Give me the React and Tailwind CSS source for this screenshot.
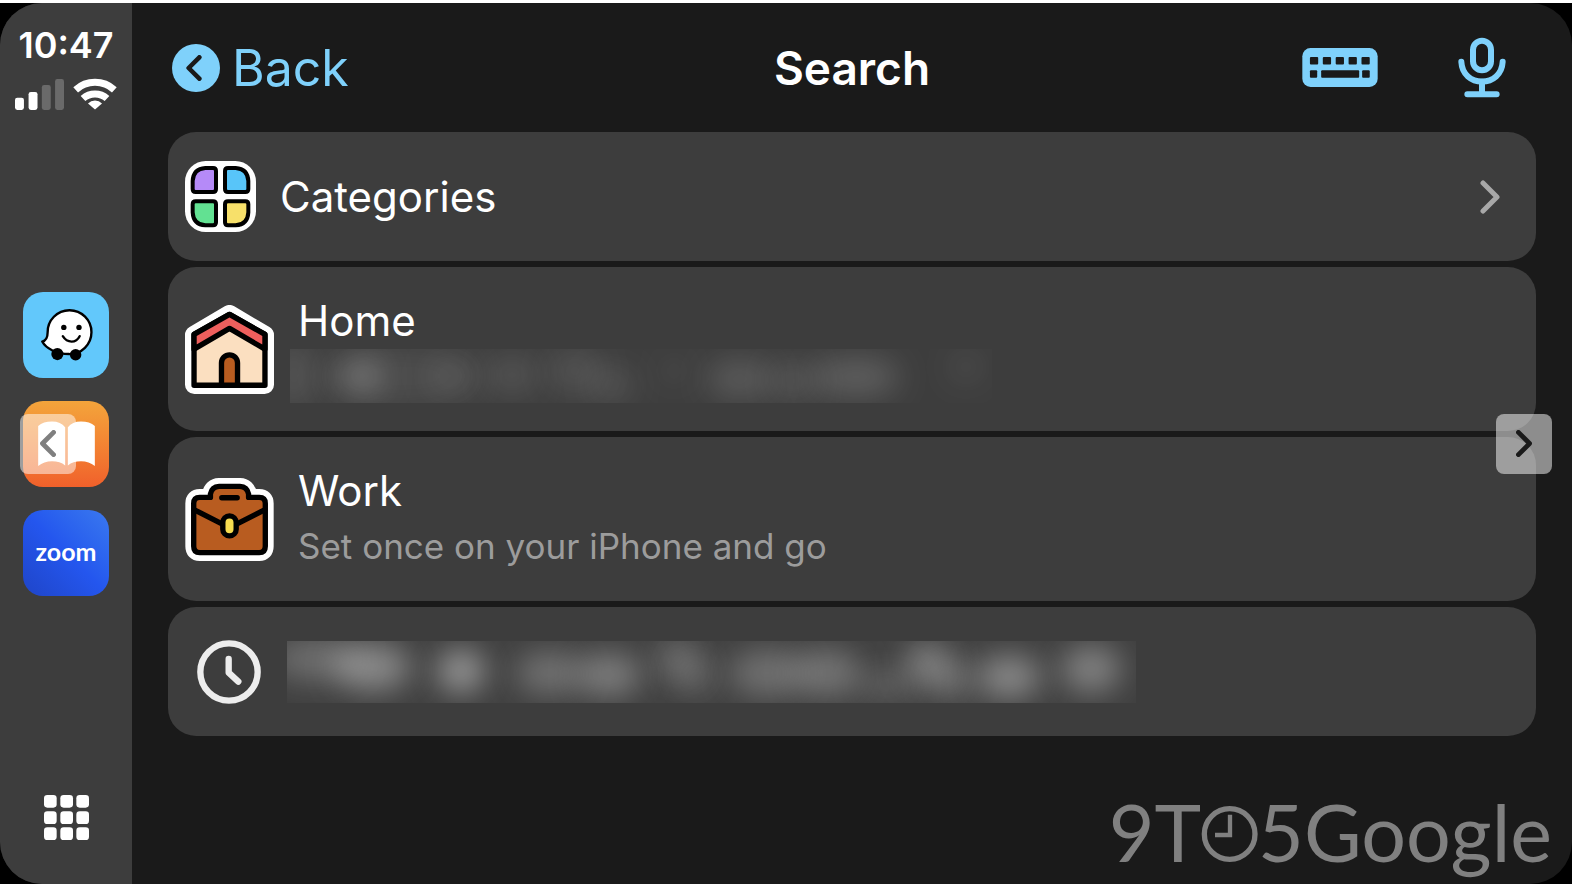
import React from 'react';
import clsx from 'clsx';

const SignalIcon = () => (
  <svg viewBox="0 0 148 93" className="w-[49px] h-[31px]" fill="#fff">
    <rect x="0" y="56" width="27" height="37" rx="7" />
    <rect x="41" y="39" width="27" height="54" rx="7" />
    <rect x="81" y="18" width="27" height="75" rx="7" fill="#6a6a6a" />
    <rect x="121" y="0" width="27" height="93" rx="7" fill="#6a6a6a" />
  </svg>
);

const WifiIcon = () => (
  <svg viewBox="0 0 132 98" className="w-11 h-[33px]" fill="none" stroke="#fff" strokeWidth="21">
    <path d="M8 38 A86 86 0 0 1 124 38" />
    <path d="M30 64 A54 54 0 0 1 102 64" />
    <path d="M66 97 L45 79 A29 29 0 0 1 87 79 Z" fill="#fff" stroke="none" />
  </svg>
);

const WazeIcon = () => (
  <svg viewBox="0 0 255 255" className="w-full h-full">
    <path
      d="M73 120 A65 65 0 1 1 137 184 C100 184 68 168 57 147 C69 144 73 136 73 120 Z"
      fill="#fff"
      stroke="#000"
      strokeWidth="7"
      strokeLinejoin="round"
    />
    <circle cx="102" cy="184" r="18" />
    <circle cx="156" cy="186" r="17" />
    <circle cx="121" cy="105" r="8" />
    <circle cx="166" cy="105" r="8" />
    <path d="M118 131 Q128 147 144 147 Q160 147 168 131" fill="none" stroke="#000" strokeWidth="7" strokeLinecap="round" />
  </svg>
);

const BooksIcon = () => (
  <svg viewBox="0 0 255 255" className="w-full h-full" fill="#fff">
    <path d="M45 74 Q60 61 86 61 Q112 61 125 78 V191 Q110 179 86 179 Q62 179 45 193 Z" />
    <path d="M213 74 Q198 61 172 61 Q146 61 133 78 V191 Q148 179 172 179 Q196 179 213 193 Z" />
  </svg>
);

const GridIcon = () => (
  <svg viewBox="0 0 135 135" className="w-[45px] h-[45px]" fill="#fff">
    {[0, 49, 97].map((y) => [0, 49, 97].map((x) => <rect key={`${x}-${y}`} x={x} y={y} width="38" height="38" rx="10" />))}
  </svg>
);

const KeyboardIcon = () => (
  <svg viewBox="0 0 228 118" className="w-[76px] h-[39px]" fill="#1a1a1a">
    <rect width="228" height="118" rx="25" fill="#7fd1fb" />
    {[23, 62, 101, 140, 179].map((x) => (
      <rect key={x} x={x} y="27" width="25" height="23" rx="3" />
    ))}
    <rect x="23" y="67" width="22" height="23" rx="3" />
    <rect x="57" y="67" width="115" height="23" rx="3" />
    <rect x="181" y="67" width="23" height="23" rx="3" />
  </svg>
);

const MicIcon = () => (
  <svg viewBox="0 0 144 182" className="w-12 h-[61px]" fill="none" stroke="#7fd1fb" strokeWidth="18" strokeLinecap="round">
    <rect x="45" y="11" width="54" height="88" rx="27" />
    <path d="M10 74 C12 112 40 133 72 133 S132 112 134 74" />
    <path d="M72 134 V170 M28 171 H116" />
  </svg>
);

const CategoriesIcon = () => (
  <svg viewBox="0 0 213 213" className="w-[71px] h-[71px]" stroke="#000" strokeWidth="12">
    <rect width="213" height="213" rx="62" fill="#fff" stroke="none" />
    <path d="M61 21 H84 Q93 21 93 30 V84 Q93 93 84 93 H32 Q23 93 23 84 V60 Q25 23 61 21 Z" fill="#b58af8" />
    <path d="M152 21 H129 Q120 21 120 30 V84 Q120 93 129 93 H181 Q190 93 190 84 V60 Q188 23 152 21 Z" fill="#58c5f9" />
    <path d="M61 193 H84 Q93 193 93 184 V130 Q93 121 84 121 H32 Q23 121 23 130 V154 Q25 191 61 193 Z" fill="#62e192" />
    <path d="M152 193 H129 Q120 193 120 184 V130 Q120 121 129 121 H181 Q190 121 190 130 V154 Q188 191 152 193 Z" fill="#f7e06a" />
  </svg>
);

const HomeIcon = () => (
  <svg viewBox="0 0 266 266" className="w-[89px] h-[89px]" stroke="#000" strokeWidth="16" strokeLinejoin="round">
    <path d="M133 28 L28 90 V238 H238 V90 Z" fill="#fff" stroke="#fff" strokeWidth="56" />
    <path d="M133 28 L27 88 V240 H239 V88 Z" fill="#fbdfc0" />
    <path d="M133 28 L27 88 V132 L133 70 L239 132 V88 Z" fill="#ee5f5d" />
    <path d="M109 240 V173 A24 24 0 0 1 157 173 V240 Z" fill="#b85c20" />
  </svg>
);

const briefcase =
  'M26 76 Q26 58 44 58 H76 V48 Q80 26 102 25 H164 Q186 26 190 48 V58 H222 Q240 58 240 76 V204 Q240 223 222 223 H44 Q26 223 26 204 Z';

const WorkIcon = () => (
  <svg viewBox="0 0 266 248" className="w-[89px] h-[83px]" stroke="#000" strokeWidth="16" strokeLinejoin="round" strokeLinecap="round">
    <path d={briefcase} fill="#fff" stroke="#fff" strokeWidth="50" />
    <path d={briefcase} fill="#b85c20" />
    <path d="M28 95 L115 139 M238 95 L151 139 M110 59 H156" fill="none" />
    <rect x="113" y="113" width="40" height="60" rx="20" fill="#f6dc50" />
  </svg>
);

const ClockIcon = () => (
  <svg viewBox="0 0 192 192" className="w-16 h-16" fill="none" stroke="#ededed" strokeWidth="19" strokeLinecap="round" strokeLinejoin="round">
    <circle cx="96" cy="96" r="86" />
    <path d="M95 57 V98 L124 125" />
  </svg>
);

const Chevron = ({ left, className }) => (
  <svg viewBox="0 0 20 34" className={className} fill="none" stroke="currentColor" strokeLinecap="round" strokeLinejoin="round">
    <path d={left ? 'M17 3 L3 17 L17 31' : 'M3 3 L17 17 L3 31'} />
  </svg>
);

// Private addresses are shown as soft smudges: [cx, cy, rx, ry, opacity]
const homeSmudges = [
  [4, 26, 20, 36, 0.12],
  [72, 27, 22, 20, 0.21],
  [110, 27, 80, 30, 0.07],
  [160, 27, 24, 20, 0.08],
  [222, 26, 26, 22, 0.11],
  [285, 22, 28, 24, 0.1],
  [322, 36, 24, 18, 0.1],
  [384, 22, 14, 16, 0.06],
  [450, 30, 34, 20, 0.15],
  [504, 32, 24, 18, 0.12],
  [566, 28, 44, 20, 0.17],
  [676, 18, 16, 16, 0.08],
];

const recentSmudges = [
  [28, 18, 44, 22, 0.24],
  [86, 26, 38, 24, 0.38],
  [174, 30, 24, 22, 0.46],
  [262, 32, 34, 22, 0.26],
  [322, 34, 32, 22, 0.32],
  [390, 18, 20, 22, 0.22],
  [408, 34, 18, 20, 0.18],
  [480, 32, 38, 24, 0.25],
  [540, 32, 34, 24, 0.27],
  [600, 44, 28, 14, 0.18],
  [640, 22, 22, 22, 0.32],
  [664, 38, 20, 20, 0.24],
  [722, 36, 32, 22, 0.38],
  [804, 28, 30, 24, 0.34],
];

const Smudge = ({ id, width, height, spots, className }) => (
  <svg viewBox={`0 0 ${width} ${height}`} width={width} height={height} className={clsx('max-w-full', className)} role="img" aria-label="Hidden address">
    <filter id={id} x="-100%" y="-150%" width="300%" height="400%">
      <feGaussianBlur stdDeviation="15" />
    </filter>
    {spots.map(([cx, cy, rx, ry, o]) => (
      <ellipse key={cx} cx={cx} cy={cy} rx={rx} ry={ry} fill="#fff" fillOpacity={o} filter={`url(#${id})`} />
    ))}
  </svg>
);

const Row = ({ icon, tall, className, children }) => (
  <button
    className={clsx(
      'w-full flex items-center pr-9 rounded-[28px] bg-[#3d3d3d] text-left text-white',
      tall ? 'h-[164px]' : 'h-[129px]',
      className || 'pl-[17px]'
    )}
  >
    {icon}
    {children}
  </button>
);

const apps = [
  { id: 'waze', label: 'Waze', bg: 'bg-[#62c8fb]', icon: <WazeIcon /> },
  { id: 'books', label: 'Books', bg: 'bg-gradient-to-b from-[#f3a43b] to-[#f0602b]', icon: <BooksIcon /> },
  {
    id: 'zoom',
    label: 'Zoom',
    bg: 'bg-gradient-to-tr from-[#1f45c8] via-[#2456ee] to-[#3b78ee]',
    icon: <span className="pb-1 font-['Lato',sans-serif] font-bold text-[25px] leading-8 text-white">zoom</span>,
  },
];

const Sidebar = () => (
  <aside className="w-[132px] shrink-0 grid grid-rows-[1fr_auto_1fr] justify-items-center bg-[#3d3d3d]">
    <div className="flex flex-col items-center pt-6">
      <time className="text-[36px] leading-9 font-semibold text-white">10:47</time>
      <div className="mt-[14px] flex items-end gap-[9px]">
        <SignalIcon />
        <WifiIcon />
      </div>
    </div>
    <nav className="flex flex-col gap-[23px]">
      {apps.map((app) => (
        <button key={app.id} aria-label={app.label} className={clsx('w-[86px] h-[86px] rounded-[20px] flex items-center justify-center', app.bg)}>
          {app.icon}
        </button>
      ))}
    </nav>
    <div className="flex items-end pb-11">
      <button aria-label="All apps">
        <GridIcon />
      </button>
    </div>
  </aside>
);

const Header = () => (
  <header className="h-[129px] grid grid-cols-[1fr_auto_1fr] items-center">
    <button className="ml-1 justify-self-start flex items-center gap-3 text-[#7fd1fb]">
      <span className="w-12 h-12 rounded-full bg-[#7fd1fb] text-[#1a1a1a] flex items-center justify-center">
        <Chevron left className="w-4 h-[26px] mr-1 stroke-[6]" />
      </span>
      <span className="text-[50px] leading-[60px]">Back</span>
    </button>
    <h1 className="text-[46px] leading-[60px] font-semibold text-white">Search</h1>
    <div className="mr-[30px] justify-self-end flex items-center gap-20">
      <button aria-label="Keyboard">
        <KeyboardIcon />
      </button>
      <button aria-label="Voice search">
        <MicIcon />
      </button>
    </div>
  </header>
);

const Watermark = () => (
  <div className="absolute right-5 bottom-1 flex items-baseline font-['Lato',sans-serif] font-normal text-[79px] leading-[96px] text-[#808080] pointer-events-none">
    <span>9T</span>
    <svg viewBox="0 0 171 168" className="w-[57px] h-14" fill="none" stroke="currentColor" strokeWidth="16">
      <circle cx="86" cy="84" r="76" />
      <path d="M87 26 V87 H42" strokeWidth="13" />
    </svg>
    <span>5Google</span>
  </div>
);

const App = () => {
  return (
    <div className="relative min-h-screen flex border-t-[3px] border-white bg-black font-[Inter,sans-serif]">
      <div className="flex-1 flex overflow-hidden rounded-[42px] bg-[#1a1a1a]">
        <Sidebar />
        <main className="flex-1 min-w-0 px-9">
          <Header />
          <div className="flex flex-col gap-[6px]">
            <Row icon={<CategoriesIcon />}>
              <span className="ml-6 flex-1 text-[42px] leading-[56px]">Categories</span>
              <Chevron className="w-5 h-[34px] text-[#a8a8a8] stroke-[5]" />
            </Row>
            <Row tall icon={<HomeIcon />}>
              <span className="ml-6 flex flex-col">
                <span className="text-[42px] leading-[54px]">Home</span>
                <span className="h-14 flex items-center -ml-2">
                  <Smudge id="home-blur" width={702} height={54} spots={homeSmudges} />
                </span>
              </span>
            </Row>
            <Row tall icon={<WorkIcon />}>
              <span className="ml-6 flex flex-col">
                <span className="text-[42px] leading-[54px]">Work</span>
                <span className="text-[35px] leading-[56px] text-[#9c9c9c]">Set once on your iPhone and go</span>
              </span>
            </Row>
            <Row className="gap-[26px] pl-[29px]" icon={<ClockIcon />}>
              <Smudge id="recent-blur" width={849} height={62} spots={recentSmudges} className="bg-white/[0.02]" />
            </Row>
          </div>
        </main>
      </div>

      <Watermark />

      <button aria-label="Previous image" className="absolute left-5 top-1/2 -translate-y-1/2 w-14 h-[60px] rounded-lg bg-white/50 text-black/50 flex items-center justify-center">
        <Chevron left className="w-4 h-[27px] stroke-[6]" />
      </button>
      <button aria-label="Next image" className="absolute right-5 top-1/2 -translate-y-1/2 w-14 h-[60px] rounded-lg bg-white/50 text-[#1a1a1a] flex items-center justify-center">
        <Chevron className="w-4 h-[27px] stroke-[6]" />
      </button>
    </div>
  );
};

export default App;
